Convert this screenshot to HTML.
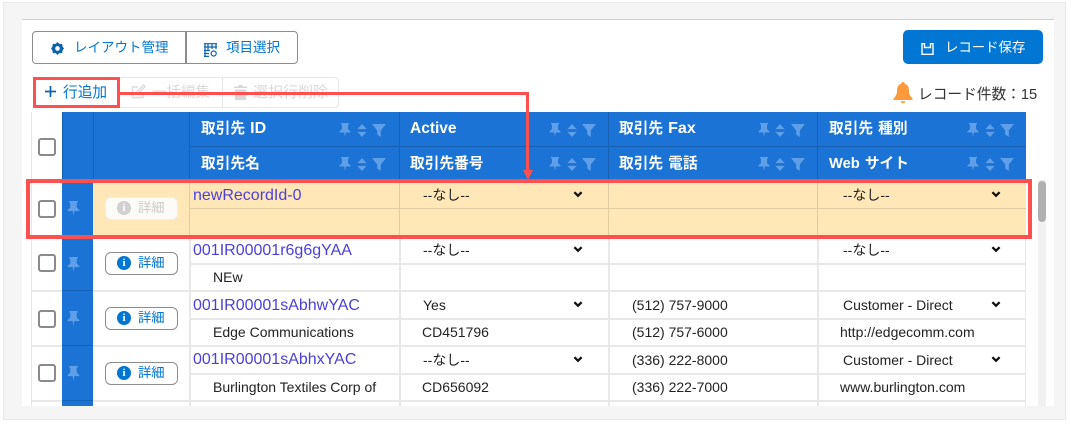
<!DOCTYPE html>
<html lang="ja"><head><meta charset="utf-8">
<style>
*{box-sizing:border-box}
html,body{margin:0;padding:0}
html{background:#fff}
body{width:1071px;height:424px;overflow:hidden;background:#fff;position:relative;font-family:"Liberation Sans","Noto Sans CJK JP",sans-serif;color:#222;filter:blur(.3px)}
.a{position:absolute}
.t{position:absolute;white-space:nowrap;line-height:20px;height:20px;font-size:14px}
.h{font-weight:700;color:#fff;font-size:14.7px;word-spacing:1px}
.l{color:#4a3fdc;font-size:16px}
.c{width:18px;height:18px;left:38px;border:2px solid #8a8a8a;border-radius:3px;background:#fff;position:absolute}
.d{position:absolute;left:105px;width:73px;height:23px;border:1.5px solid #8c8c8c;border-radius:6px;background:#fff;color:#0176d3;font-size:13.3px;line-height:20px;padding-left:32px}
.d i{position:absolute;left:11px;top:3px;width:14px;height:14px;border-radius:50%;background:#0176d3;color:#fff;font:bold 11px/14px "Liberation Serif",serif;text-align:center}
.d.x{background:#fdfbf7;border-color:#eee;color:#ccc}.d.x i{background:#d0d0d0}
svg.i{position:absolute;overflow:visible}
</style></head><body>
<svg width="0" height="0" style="position:absolute"><defs>
<symbol id="pin" viewBox="0 0 12 14"><path d="M2 0H10V1.5H9V6L11.5 8.5V9.5H6.8L6 14L5.2 9.5H.5V8.5L3 6V1.5H2Z"/></symbol>
<symbol id="sort" viewBox="0 0 10 14"><path d="M5 0L10 5.5H0ZM0 8.5H10L5 14Z"/></symbol>
<symbol id="fil" viewBox="0 0 14 14"><path d="M0 1H14L8.8 7.5V14L5.2 11.5V7.5Z"/></symbol>
<symbol id="chev" viewBox="0 0 10 7"><path d="M1.4 1.2L5 4.8L8.6 1.2" fill="none" stroke="#111" stroke-width="2.3"/></symbol>
</defs></svg>

<div class="a" style="left:3px;top:2px;width:1063px;height:418px;background:#f5f5f5;border:1px solid #e8e8e8"></div>
<div class="a" style="left:22px;top:19px;width:1032px;height:387px;background:#fff;border-top:1px solid #cfcfcf"></div>

<div class="a" style="left:32px;top:31px;width:266px;height:33px;border:1.5px solid #8c8c8c;border-radius:4px;background:#fff"></div>
<div class="a" style="left:185px;top:31px;width:1.5px;height:33px;background:#8c8c8c"></div>
<svg class="i" style="left:51px;top:42px" width="13" height="13" viewBox="0 0 14 14"><path d="M7 0L9 2H12L12.5 5L14 7L12.5 9L12 12H9L7 14L5 12H2L1.5 9L0 7L1.5 5L2 2H5Z" fill="#0b62ad"/><circle cx="7" cy="7" r="2.5" fill="#fff"/></svg>
<div class="t" style="left:74px;top:38px;font-size:13.5px;color:#0176d3">レイアウト管理</div>
<svg class="i" style="left:204px;top:43px" width="13" height="14" viewBox="0 0 13 14" fill="none" stroke="#0b62ad" stroke-width="1.2"><path d="M0 .7H13M0 4H13M0 7.5H6M0 10.5H5M0 13.4H5M1 1V13M4 1V7M8 1V6M12 1V6"/><circle cx="9.7" cy="10.5" r="2.5"/></svg>
<div class="t" style="left:226px;top:38px;font-size:13.5px;color:#0176d3">項目選択</div>

<div class="a" style="left:903px;top:30px;width:140px;height:34px;background:#0176d3;border-radius:5px"></div>
<svg class="i" style="left:921px;top:43px" width="13" height="12" viewBox="0 0 13 12" fill="none" stroke="#fff" stroke-width="1.4"><path d="M3.5 .7H1V11.3H12V.7H9.5M3.5 0V4.5H9.5V0"/></svg>
<div class="t" style="left:945px;top:38px;font-size:13.4px;color:#fff">レコード保存</div>

<div class="a" style="left:33px;top:77px;width:306px;height:31px;border:1px solid #e6e6e6;border-radius:4px;background:#fff"></div>
<div class="a" style="left:222px;top:77px;width:1px;height:31px;background:#e6e6e6"></div>
<svg class="i" style="left:131px;top:84px" width="15" height="15" viewBox="0 0 15 15" fill="none" stroke="#ddd" stroke-width="1.5"><path d="M7 3H1.5V13.5H12V8M6 9.5L6.5 7L12.5 1L14 2.5L8 8.5Z"/></svg>
<div class="t" style="left:152px;top:83px;font-size:14.5px;color:#d8d8d8">一括編集</div>
<svg class="i" style="left:234px;top:85px" width="13" height="15" viewBox="0 0 13 15"><path d="M0 1.5H4.5V0H8.5V1.5H13V3H0ZM1 4.5H12V15H1Z" fill="#d8d8d8"/></svg>
<div class="t" style="left:253px;top:83px;font-size:15px;color:#d8d8d8">選択行削除</div>
<svg class="i" style="left:44px;top:85px" width="13" height="13" viewBox="0 0 13 13"><path d="M6.5 1V12M1 6.5H12" stroke="#0b62ad" stroke-width="1.7"/></svg>
<div class="t" style="left:63px;top:83px;font-size:14.7px;color:#0176d3">行追加</div>

<svg class="i" style="left:893px;top:82px" width="20" height="22" viewBox="0 0 20 22"><path d="M10 0C11 0 11.7.7 11.8 1.8C15 2.8 16 5.5 16 9C16 12.5 17.5 14.5 19.5 16.5V18H.5V16.5C2.5 14.5 4 12.5 4 9C4 5.5 5 2.8 8.2 1.8C8.3.7 9 0 10 0ZM7.5 19.2H12.5C12 20.6 11.2 21.2 10 21.2C8.8 21.2 8 20.6 7.5 19.2Z" fill="#ff9a3c"/></svg>
<div class="t" style="left:918px;top:85px;font-size:14.7px;color:#333">レコード件数：15</div>

<!-- table -->
<div class="a" style="left:31px;top:112px;width:995px;height:294px;overflow:hidden;background:#fff;border-left:1px solid #e6e6e6">
<div class="a" style="left:30px;top:0;width:965px;height:68px;background:#1a73d5"></div>
<div class="a" style="left:30px;top:0;width:31px;height:294px;background:#1a73d5"></div>
<div class="a" style="left:157px;top:34px;width:838px;height:1px;background:#1560b5"></div>
<div class="a" style="left:30px;top:0;width:1px;height:68px;background:#1560b5"></div>
<div class="a" style="left:61px;top:0;width:1px;height:68px;background:#1560b5"></div>
<div class="a" style="left:157px;top:0;width:1px;height:68px;background:#1560b5"></div>
<div class="a" style="left:367px;top:0;width:1px;height:68px;background:#1560b5"></div>
<div class="a" style="left:576px;top:0;width:1px;height:68px;background:#1560b5"></div>
<div class="a" style="left:785px;top:0;width:1px;height:68px;background:#1560b5"></div>
<div class="a" style="left:61px;top:68px;width:934px;height:56px;background:#ffe7b8"></div>
<div class="a" style="left:157px;top:96px;width:838px;height:1px;background:#e0cc9f"></div>
<div class="a" style="left:157px;top:68px;width:1px;height:56px;background:#e0cc9f"></div>
<div class="a" style="left:367px;top:68px;width:1px;height:56px;background:#e0cc9f"></div>
<div class="a" style="left:576px;top:68px;width:1px;height:56px;background:#e0cc9f"></div>
<div class="a" style="left:785px;top:68px;width:1px;height:56px;background:#e0cc9f"></div>
<!-- body grid -->
<div class="a" style="left:157px;top:124px;width:2px;height:170px;background:#e8e8e8"></div>
<div class="a" style="left:367px;top:124px;width:2px;height:170px;background:#e8e8e8"></div>
<div class="a" style="left:576px;top:124px;width:2px;height:170px;background:#e8e8e8"></div>
<div class="a" style="left:785px;top:124px;width:2px;height:170px;background:#e8e8e8"></div>
<div class="a" style="left:993px;top:124px;width:1px;height:170px;background:#e8e8e8"></div>
<div class="a" style="left:157px;top:151px;width:837px;height:2px;background:#e8e8e8"></div>
<div class="a" style="left:157px;top:206px;width:837px;height:2px;background:#e8e8e8"></div>
<div class="a" style="left:157px;top:261px;width:837px;height:2px;background:#e8e8e8"></div>
<div class="a" style="left:0;top:178px;width:30px;height:2px;background:#e8e8e8"></div>
<div class="a" style="left:61px;top:178px;width:933px;height:2px;background:#e8e8e8"></div>
<div class="a" style="left:0;top:233px;width:30px;height:2px;background:#e8e8e8"></div>
<div class="a" style="left:61px;top:233px;width:933px;height:2px;background:#e8e8e8"></div>
<div class="a" style="left:0;top:288px;width:30px;height:2px;background:#e8e8e8"></div>
<div class="a" style="left:61px;top:288px;width:933px;height:2px;background:#e8e8e8"></div>
<div class="a" style="left:30px;top:178px;width:31px;height:1px;background:#1560b5"></div>
<div class="a" style="left:30px;top:233px;width:31px;height:1px;background:#1560b5"></div>
<div class="a" style="left:30px;top:288px;width:31px;height:1px;background:#1560b5"></div>
</div>

<div class="t h" style="left:201px;top:119px">取引先 <span style="font-size:16px">ID</span></div>
<div class="t h" style="left:201px;top:154px">取引先名</div>
<div class="t h" style="left:410px;top:119px;font-size:15.5px">Active</div>
<div class="t h" style="left:410px;top:154px">取引先番号</div>
<div class="t h" style="left:619px;top:119px">取引先 <span style="font-size:16px">Fax</span></div>
<div class="t h" style="left:619px;top:154px">取引先 電話</div>
<div class="t h" style="left:829px;top:119px">取引先 種別</div>
<div class="t h" style="left:829px;top:154px">Web サイト</div>

<!-- header icons -->
<svg class="i" style="left:0;top:0" width="1071" height="424" fill="#5f9ee8">
<use href="#pin" x="339" y="123" width="12" height="14"/><use href="#sort" x="357" y="124" width="10" height="13"/><use href="#fil" x="372" y="123" width="14" height="14"/>
<use href="#pin" x="339" y="157" width="12" height="14"/><use href="#sort" x="357" y="158" width="10" height="13"/><use href="#fil" x="372" y="157" width="14" height="14"/>
<use href="#pin" x="549" y="123" width="12" height="14"/><use href="#sort" x="567" y="124" width="10" height="13"/><use href="#fil" x="582" y="123" width="14" height="14"/>
<use href="#pin" x="549" y="157" width="12" height="14"/><use href="#sort" x="567" y="158" width="10" height="13"/><use href="#fil" x="582" y="157" width="14" height="14"/>
<use href="#pin" x="758" y="123" width="12" height="14"/><use href="#sort" x="775" y="124" width="10" height="13"/><use href="#fil" x="791" y="123" width="14" height="14"/>
<use href="#pin" x="758" y="157" width="12" height="14"/><use href="#sort" x="775" y="158" width="10" height="13"/><use href="#fil" x="791" y="157" width="14" height="14"/>
<use href="#pin" x="967" y="123" width="12" height="14"/><use href="#sort" x="985" y="124" width="10" height="13"/><use href="#fil" x="1000" y="123" width="14" height="14"/>
<use href="#pin" x="967" y="157" width="12" height="14"/><use href="#sort" x="985" y="158" width="10" height="13"/><use href="#fil" x="1000" y="157" width="14" height="14"/>
<use href="#pin" x="67" y="201" width="13" height="15"/><use href="#pin" x="67" y="257" width="13" height="15"/><use href="#pin" x="67" y="311" width="13" height="15"/><use href="#pin" x="67" y="366" width="13" height="15"/>
<use href="#chev" x="573" y="191" width="10" height="7"/><use href="#chev" x="573" y="246" width="10" height="7"/><use href="#chev" x="573" y="301" width="10" height="7"/><use href="#chev" x="573" y="356" width="10" height="7"/>
<use href="#chev" x="991" y="191" width="10" height="7"/><use href="#chev" x="991" y="246" width="10" height="7"/><use href="#chev" x="991" y="301" width="10" height="7"/><use href="#chev" x="991" y="356" width="10" height="7"/>
</svg>

<div class="c" style="top:138px"></div><div class="c" style="top:200px"></div><div class="c" style="top:254px"></div><div class="c" style="top:310px"></div><div class="c" style="top:364px"></div>

<div class="d x" style="top:197px"><i>i</i>詳細</div>
<div class="d" style="top:252px"><i>i</i>詳細</div>
<div class="d" style="top:307px"><i>i</i>詳細</div>
<div class="d" style="top:362px"><i>i</i>詳細</div>

<div class="t l" style="left:193px;top:186px">newRecordId-0</div>
<div class="t l" style="left:193px;top:241px">001IR00001r6g6gYAA</div>
<div class="t l" style="left:193px;top:296px">001IR00001sAbhwYAC</div>
<div class="t l" style="left:193px;top:350px">001IR00001sAbhxYAC</div>
<div class="t" style="left:213px;top:267px">NEw</div>
<div class="t" style="left:213px;top:322px">Edge Communications</div>
<div class="t" style="left:213px;top:377px">Burlington Textiles Corp of</div>

<div class="t" style="left:423px;top:185px">--なし--</div>
<div class="t" style="left:423px;top:240px">--なし--</div>
<div class="t" style="left:423px;top:295px">Yes</div>
<div class="t" style="left:423px;top:350px">--なし--</div>
<div class="t" style="left:422px;top:322px">CD451796</div>
<div class="t" style="left:422px;top:377px">CD656092</div>

<div class="t" style="left:632px;top:295px">(512) 757-9000</div>
<div class="t" style="left:632px;top:322px">(512) 757-6000</div>
<div class="t" style="left:632px;top:350px">(336) 222-8000</div>
<div class="t" style="left:632px;top:377px">(336) 222-7000</div>

<div class="t" style="left:843px;top:185px">--なし--</div>
<div class="t" style="left:843px;top:240px">--なし--</div>
<div class="t" style="left:843px;top:295px">Customer - Direct</div>
<div class="t" style="left:843px;top:350px">Customer - Direct</div>
<div class="t" style="left:840px;top:322px">http://edgecomm.com</div>
<div class="t" style="left:840px;top:377px">www.burlington.com</div>

<!-- scrollbar -->
<div class="a" style="left:1038px;top:180px;width:8px;height:226px;background:#f1f1f1"></div>
<div class="a" style="left:1038px;top:181px;width:8px;height:41px;background:#b0b0b0;border-radius:4px"></div>

<!-- annotations -->
<div class="a" style="left:26px;top:179px;width:1006px;height:60px;border:4px solid #ff5050"></div>
<div class="a" style="left:33px;top:77px;width:87px;height:31px;border:3.5px solid #ff5050"></div>
<svg class="i" style="left:0;top:0" width="1071" height="424"><path d="M120 93.5H527.5V172" fill="none" stroke="#ff5050" stroke-width="3"/><path d="M523 170H533L528 180Z" fill="#ff5050"/></svg>
</body></html>
